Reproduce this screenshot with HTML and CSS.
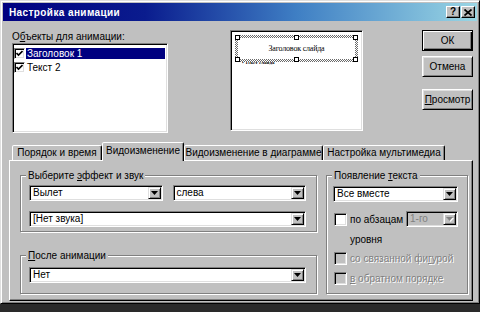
FILE: index.html
```html
<!DOCTYPE html>
<html lang="ru">
<head>
    <meta charset="UTF-8">
    <title>Настройка анимации</title>
    <link rel="stylesheet" href="styles.css">
</head>
<body>
    <div class="window">
        <div class="titlebar">
            <span class="title">Настройка анимации</span>
            <div class="title-btns">
                <span class="tbtn help">?</span>
                <span class="tbtn close">
                    <svg width="8" height="7" viewBox="0 0 8 7"><path d="M0.5 0.5 L7.5 6.5 M7.5 0.5 L0.5 6.5" stroke="#000" stroke-width="1.7"/></svg>
                </span>
            </div>
        </div>

        <div class="main">
            <div class="top">
                <div class="objects">
                    <div class="lbl">О<u>б</u>ъекты для анимации:</div>
                    <div class="list">
                        <div class="item">
                            <span class="check small"><svg width="7" height="7" viewBox="0 0 7 7"><path d="M0.5 3 L2.5 5 L6.5 1" fill="none" stroke="#000" stroke-width="1.6"/></svg></span>
                            <span class="item-text selected">Заголовок 1</span>
                        </div>
                        <div class="item">
                            <span class="check small"><svg width="7" height="7" viewBox="0 0 7 7"><path d="M0.5 3 L2.5 5 L6.5 1" fill="none" stroke="#000" stroke-width="1.6"/></svg></span>
                            <span class="item-text">Текст 2</span>
                        </div>
                    </div>
                </div>

                <div class="preview">
                    <div class="ph">
                        <div class="ph-in">Заголовок слайда</div>
                        <i class="handle h-tl"></i>
                        <i class="handle h-tm"></i>
                        <i class="handle h-tr"></i>
                        <i class="handle h-bl"></i>
                        <i class="handle h-bm"></i>
                        <i class="handle h-br"></i>
                    </div>
                    <div class="ph-body">• Текст слайда</div>
                </div>

                <div class="buttons">
                    <button class="btn default">ОК</button>
                    <button class="btn">Отмена</button>
                    <button class="btn show"><u>П</u>росмотр</button>
                </div>
            </div>

            <div class="tabs">
                <div class="tab t1">Порядок и время</div>
                <div class="tab t2 active">Видоизменение</div>
                <div class="tab t3">Видоизменение в диаграмме</div>
                <div class="tab t4">Настройка мультимедиа</div>
            </div>

            <div class="panel">
                <div class="col-left">
                    <div class="group g-effect">
                        <span class="group-title">Выберите <u>э</u>ффект и звук</span>
                        <div class="group-body">
                            <div class="row">
                                <div class="combo">
                                    <span class="combo-text">Вылет</span>
                                    <span class="arrow"><svg width="7" height="4" viewBox="0 0 7 4"><path d="M0 0 H7 L3.5 4 Z" fill="#000"/></svg></span>
                                </div>
                                <div class="combo">
                                    <span class="combo-text">слева</span>
                                    <span class="arrow"><svg width="7" height="4" viewBox="0 0 7 4"><path d="M0 0 H7 L3.5 4 Z" fill="#000"/></svg></span>
                                </div>
                            </div>
                            <div class="combo sound">
                                <span class="combo-text">[Нет звука]</span>
                                <span class="arrow"><svg width="7" height="4" viewBox="0 0 7 4"><path d="M0 0 H7 L3.5 4 Z" fill="#000"/></svg></span>
                            </div>
                        </div>
                    </div>

                    <div class="group g-after">
                        <span class="group-title"><u>П</u>осле анимации</span>
                        <div class="group-body">
                            <div class="combo">
                                <span class="combo-text">Нет</span>
                                <span class="arrow"><svg width="7" height="4" viewBox="0 0 7 4"><path d="M0 0 H7 L3.5 4 Z" fill="#000"/></svg></span>
                            </div>
                        </div>
                    </div>
                </div>

                <div class="group g-text">
                    <span class="group-title">Появление <u>т</u>екста</span>
                    <div class="group-body">
                        <div class="combo">
                            <span class="combo-text">Все вместе</span>
                            <span class="arrow"><svg width="7" height="4" viewBox="0 0 7 4"><path d="M0 0 H7 L3.5 4 Z" fill="#000"/></svg></span>
                        </div>
                        <div class="check-row para">
                            <span class="check"></span>
                            <span class="check-label">по абзацам</span>
                            <div class="combo level disabled">
                                <span class="combo-text">1-го</span>
                                <span class="arrow"><svg width="8" height="5" viewBox="0 0 8 5"><path d="M1 1 H8 L4.5 5 Z" fill="#fff"/><path d="M0 0 H7 L3.5 4 Z" fill="#808080"/></svg></span>
                            </div>
                        </div>
                        <div class="level-text">уровня</div>
                        <div class="check-row off linked">
                            <span class="check"></span>
                            <span class="check-label">со связанной фи<u>г</u>урой</span>
                        </div>
                        <div class="check-row off reverse">
                            <span class="check"></span>
                            <span class="check-label"><u>в</u> обратном порядке</span>
                        </div>
                    </div>
                </div>
            </div>
        </div>
    </div>
</body>
</html>
```

FILE: styles.css
```css
* {
    box-sizing: border-box;
}

body {
    margin: 0;
    background: #2a2a2a;
    font-family: "Liberation Sans", Arial, sans-serif;
    font-size: 10px;
    color: #000;
}

.window {
    width: 480px;
    height: 304px;
    padding: 2px;
    background: #c0c0c0;
    border: 1px solid;
    border-color: #dfdfdf #000 #000 #dfdfdf;
    box-shadow: inset 1px 1px #fff, inset -1px -1px #808080;
}

/* title bar */
.titlebar {
    height: 18px;
    display: flex;
    align-items: center;
    justify-content: space-between;
    padding: 0 2px 0 6px;
    background: linear-gradient(to right, #000080 0%, #0a1c8e 30%, #3f7fc4 62%, #9ad6e4 100%);
}

.title {
    color: #fff;
    font-weight: bold;
    font-size: 10px;
    letter-spacing: 0.4px;
}

.title-btns {
    display: flex;
    gap: 1px;
}

.tbtn {
    width: 14px;
    height: 12px;
    display: flex;
    align-items: center;
    justify-content: center;
    background: #c0c0c0;
    border: 1px solid;
    border-color: #fff #000 #000 #fff;
    box-shadow: inset -1px -1px #808080;
    font-weight: bold;
    font-size: 10px;
    line-height: 10px;
}

/* main area */
.main {
    padding: 0 4px 0 6px;
}

.top {
    display: flex;
    align-items: flex-start;
    margin-top: 9px;
    padding-left: 3px;
}

.objects {
    width: 156px;
}

.lbl {
    height: 13px;
    line-height: 13px;
}

.list {
    height: 90px;
    padding: 3px 2px 0 1px;
    background: #fff;
    border: 1px solid;
    border-color: #808080 #fff #fff #808080;
    box-shadow: inset 1px 1px #000, inset -1px -1px #dfdfdf;
}

.item {
    height: 14px;
    display: flex;
    align-items: flex-start;
    padding-top: 1px;
}

.item-text {
    flex: 1;
    height: 11px;
    line-height: 11px;
    margin-left: 1px;
    padding-left: 1px;
}

.item-text.selected {
    background: #000080;
    color: #fff;
}

.check {
    width: 13px;
    height: 13px;
    display: flex;
    align-items: center;
    justify-content: center;
    flex: none;
    background: #fff;
    border: 1px solid;
    border-color: #808080 #fff #fff #808080;
    box-shadow: inset 1px 1px #000, inset -1px -1px #dfdfdf;
}

.check.small {
    width: 11px;
    height: 11px;
}

/* slide preview */
.preview {
    width: 133px;
    height: 101px;
    margin-left: 62px;
    padding: 4px 0 0 4px;
    background: #fff;
    border: 1px solid;
    border-color: #808080 #fff #fff #808080;
    box-shadow: inset 1px 1px #000, inset -1px -1px #dfdfdf;
}

.ph {
    position: relative;
    width: 123px;
    height: 27px;
    padding: 3px;
    background: repeating-conic-gradient(#6a6a6a 0 25%, #fff 0 50%) 0 0 / 2px 2px;
}

.ph-in {
    height: 100%;
    background: #fff;
    display: flex;
    align-items: center;
    justify-content: center;
    font-family: "Liberation Serif", serif;
    font-size: 8px;
    letter-spacing: -0.2px;
}

.handle {
    position: absolute;
    width: 5px;
    height: 5px;
    background: #fff;
    border: 1px solid #000;
}

.h-tl { left: 0; top: 0; }
.h-tm { left: 59px; top: 0; }
.h-tr { right: 0; top: 0; }
.h-bl { left: 0; bottom: 0; }
.h-bm { left: 59px; bottom: 0; }
.h-br { right: 0; bottom: 0; }

.ph-body {
    margin: -2px 0 0 7px;
    font-family: "Liberation Serif", serif;
    font-size: 5px;
    font-weight: bold;
}

/* buttons */
.buttons {
    width: 51px;
    margin-left: 59px;
    display: flex;
    flex-direction: column;
}

.btn {
    height: 21px;
    margin: 0;
    padding: 0;
    font-family: inherit;
    font-size: 10px;
    color: #000;
    background: #c0c0c0;
    border: 1px solid;
    border-color: #fff #000 #000 #fff;
    box-shadow: inset 1px 1px #dfdfdf, inset -1px -1px #808080;
}

.btn.default {
    border-color: #000;
    box-shadow: inset 1px 1px #fff, inset -1px -1px #000, inset -2px -2px #808080;
}

.btn + .btn {
    margin-top: 5px;
}

.btn.show {
    margin-top: 12px;
}

/* tabs */
.tabs {
    display: flex;
    align-items: flex-end;
    height: 18px;
    margin-top: 9px;
    padding-left: 3px;
}

.tab {
    height: 15px;
    line-height: 13px;
    text-align: center;
    white-space: nowrap;
    background: #c0c0c0;
    border: 1px solid;
    border-bottom: none;
    border-color: #fff #000 transparent #fff;
    border-radius: 2px 2px 0 0;
    box-shadow: inset -1px 0 #808080;
}

.tab.active {
    position: relative;
    z-index: 1;
    height: 19px;
    margin-bottom: -1px;
    line-height: 15px;
}

.t1 { width: 90px; }
.t2 { width: 82px; }
.t3 { width: 139px; }
.t4 { width: 122px; }

.panel {
    height: 141px;
    display: grid;
    grid-template-columns: 297px 142px;
    column-gap: 9px;
    padding: 14px 4px 6px 10px;
    border: 1px solid;
    border-color: #fff #000 #000 #fff;
    box-shadow: inset -1px -1px #808080;
}

/* etched group boxes */
.group {
    border: 1px solid #808080;
    box-shadow: inset 1px 1px #fff, 1px 1px #fff;
}

.group-title {
    display: block;
    width: fit-content;
    height: 13px;
    line-height: 13px;
    margin: -7px 0 0 5px;
    padding: 0 2px;
    background: #c0c0c0;
}

.g-effect .group-body {
    padding: 3px 10px 4px 8px;
}

.g-after {
    margin-top: 23px;
}

.g-after .group-body {
    padding: 5px 10px 10px 8px;
}

.g-text .group-body {
    padding: 4px 9px 0 6px;
}

.row {
    display: flex;
    gap: 10px;
}

.row .combo {
    flex: 1;
}

/* combo boxes */
.combo {
    height: 16px;
    display: flex;
    align-items: stretch;
    padding: 1px;
    background: #fff;
    border: 1px solid;
    border-color: #808080 #fff #fff #808080;
    box-shadow: inset 1px 1px #000, inset -1px -1px #dfdfdf;
}

.combo.sound {
    margin-top: 10px;
}

.combo-text {
    flex: 1;
    padding-left: 2px;
    line-height: 12px;
    white-space: nowrap;
}

.arrow {
    width: 13px;
    display: flex;
    align-items: center;
    justify-content: center;
    background: #c0c0c0;
    border: 1px solid;
    border-color: #dfdfdf #000 #000 #dfdfdf;
    box-shadow: inset 1px 1px #fff, inset -1px -1px #808080;
}

.combo.disabled {
    background: #c0c0c0;
    color: #808080;
}

/* checkbox rows */
.check-row {
    display: flex;
    align-items: center;
    height: 13px;
}

.check-row .check {
    margin-left: 1px;
}

.check-label {
    margin-left: 3px;
    white-space: nowrap;
}

.check-row.para {
    height: 16px;
    margin-top: 9px;
}

.combo.level {
    width: 52px;
    margin-left: auto;
}

.level-text {
    height: 13px;
    line-height: 13px;
    margin-top: 6px;
    padding-left: 17px;
}

.check-row.off .check {
    background: #c0c0c0;
}

.check-row.off .check-label {
    color: #808080;
    text-shadow: 1px 1px #fff;
}

.check-row.linked {
    margin-top: 6px;
}

.check-row.reverse {
    margin-top: 7px;
}
```
